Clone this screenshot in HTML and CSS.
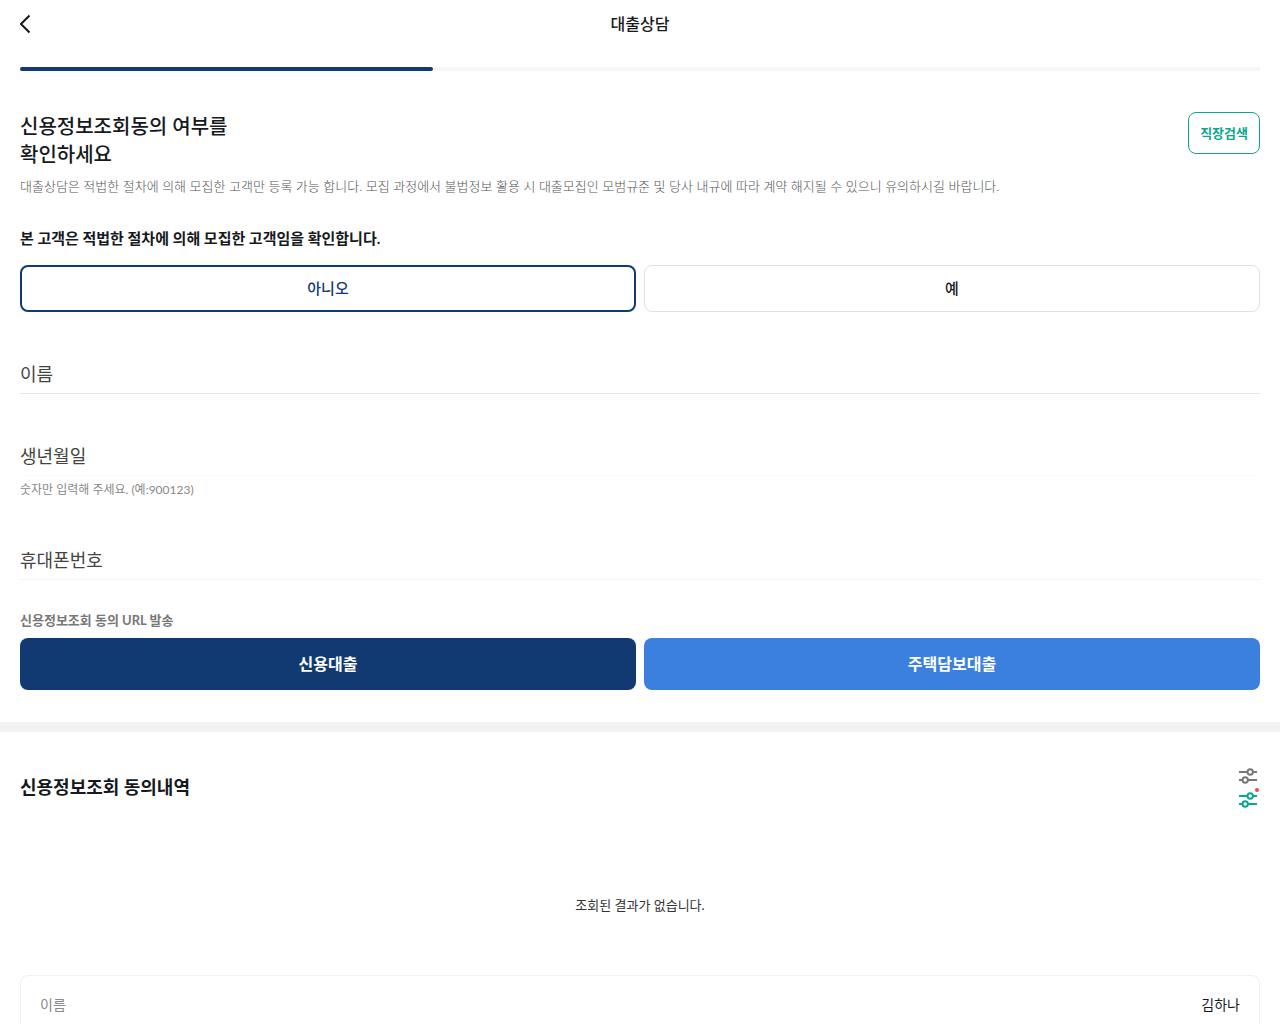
FILE: index.html
```html
<!DOCTYPE html>
<html lang="ko">
<head>
  <meta charset="UTF-8">
  <meta name="viewport" content="width=device-width, initial-scale=1">
  <title>대출상담</title>
  <link rel="stylesheet" href="styles.css">
</head>
<body>

<header class="header">
  <button type="button" class="btn-back" aria-label="이전">
    <svg width="12" height="20" viewBox="0 0 12 20" fill="none" stroke="#16191d" stroke-width="2"><path d="M9.500 1.500 1 10 9.500 18.500"/></svg>
  </button>
  <h1>대출상담</h1>
</header>

<main>
  <section class="consult">
    <div class="progress"><div class="progress-bar"></div></div>

    <div class="title-row">
      <h2>신용정보조회동의 여부를<br>확인하세요</h2>
      <button type="button" class="btn-search">직장검색</button>
    </div>
    <p class="desc">대출상담은 적법한 절차에 의해 모집한 고객만 등록 가능 합니다. 모집 과정에서 불법정보 활용 시 대출모집인 모범규준 및 당사 내규에 따라 계약 해지될 수 있으니 유의하시길 바랍니다.</p>

    <h3 class="question">본 고객은 적법한 절차에 의해 모집한 고객임을 확인합니다.</h3>
    <div class="btn-group">
      <button type="button" class="btn-choice on" aria-pressed="true">아니오</button>
      <button type="button" class="btn-choice" aria-pressed="false">예</button>
    </div>

    <form class="form">
      <div class="field">
        <label for="name">이름</label>
        <input type="text" id="name">
      </div>
      <div class="field light">
        <label for="birth">생년월일</label>
        <input type="text" id="birth" inputmode="numeric" aria-describedby="birth-help">
      </div>
      <p class="help" id="birth-help">숫자만 입력해 주세요. (예:900123)</p>
      <div class="field soft">
        <label for="phone">휴대폰번호</label>
        <input type="tel" id="phone">
      </div>

      <h3 class="send-title">신용정보조회 동의 URL 발송</h3>
      <div class="btn-group">
        <button type="button" class="btn-send navy">신용대출</button>
        <button type="button" class="btn-send blue">주택담보대출</button>
      </div>
    </form>
  </section>

  <section class="history">
    <div class="history-head">
      <h2>신용정보조회 동의내역</h2>
      <div class="filters">
        <button type="button" class="btn-filter" aria-label="필터">
          <svg width="24" height="24" viewBox="0 0 24 24" fill="none" stroke="currentColor" stroke-width="2"><path d="M3 8h8.500M17 8h4M3 16h3.500M12 16h9"/><circle cx="14.200" cy="8" r="2.700"/><circle cx="9.200" cy="16" r="2.700"/></svg>
        </button>
        <button type="button" class="btn-filter active" aria-label="필터 적용됨">
          <svg width="24" height="24" viewBox="0 0 24 24" fill="none" stroke="currentColor" stroke-width="2"><path d="M3 8h8.500M17 8h4M3 16h3.500M12 16h9"/><circle cx="14.200" cy="8" r="2.700"/><circle cx="9.200" cy="16" r="2.700"/><circle cx="21" cy="2" r="2" fill="#f04a43" stroke="none"/></svg>
        </button>
      </div>
    </div>
    <p class="empty">조회된 결과가 없습니다.</p>
    <dl class="card">
      <div class="card-row">
        <dt>이름</dt>
        <dd>김하나</dd>
      </div>
    </dl>
  </section>
</main>

</body>
</html>
```

FILE: styles.css
```css
* {
  margin: 0;
  padding: 0;
  box-sizing: border-box;
}

body {
  font-family: Lato, 'Noto Sans CJK KR', sans-serif;
  background: #fff;
  color: #16191d;
  font-size: 14px;
  line-height: 20px;
}

button,
input {
  font-family: inherit;
  border: 0;
  background: none;
}

button {
  cursor: pointer;
}

svg {
  display: block;
}

/* Header */
.header {
  display: grid;
  grid-template-columns: 40px 1fr 40px;
  align-items: center;
  height: 48px;
  padding: 0 20px;
}

.header h1 {
  font-size: 16px;
  line-height: 24px;
  font-weight: 500;
  text-align: center;
}

.btn-back {
  justify-self: start;
}

/* Consult form */
.consult {
  padding: 19px 20px 32px;
  border-bottom: 10px solid #f2f2f2;
}

.progress {
  height: 4px;
  border-radius: 2px;
  background: #f6f6f7;
}

.progress-bar {
  width: 33.3333%;
  height: 4px;
  border-radius: 2px;
  background: #123a72;
}

.title-row {
  display: flex;
  justify-content: space-between;
  align-items: flex-start;
  margin-top: 41px;
}

.title-row h2 {
  font-size: 20px;
  line-height: 28px;
  font-weight: 500;
}

.btn-search {
  height: 42px;
  padding: 0 11px 2px;
  border: 1px solid #0aa68e;
  border-radius: 8px;
  color: #0aa68e;
  font-size: 13px;
  font-weight: 700;
}

.desc {
  margin-top: 8px;
  color: #555;
  font-size: 13px;
  font-weight: 300;
}

.question {
  margin: 31px 0 16px;
  font-size: 15px;
  line-height: 22px;
  font-weight: 700;
}

.btn-group {
  display: grid;
  grid-template-columns: 1fr 1fr;
  gap: 8px;
}

.btn-choice {
  height: 47px;
  padding-bottom: 2px;
  border: 1px solid #dfe1e4;
  border-radius: 8px;
  color: #16191d;
  font-size: 15px;
  font-weight: 500;
}

.btn-choice.on {
  border: 2px solid #123a72;
  color: #123a72;
}

.form {
  margin-top: 42px;
}

.field {
  display: flex;
  height: 40px;
  border-bottom: 1px solid #e5e5e5;
}

.field + .field {
  margin-top: 42px;
}

.field label {
  color: #444;
  font-size: 18px;
  line-height: 40px;
}

.field input {
  flex: 1;
  min-width: 0;
  padding-left: 12px;
  font-size: 18px;
  outline: none;
}

.field.light {
  border-color: #fafafa;
}

.field.soft {
  margin-top: 40px;
  border-color: #f4f4f4;
}

.help {
  margin-top: 4px;
  color: #888;
  font-size: 12px;
}

.send-title {
  margin: 30px 0 8px;
  color: #777;
  font-size: 13px;
  font-weight: 700;
}

.btn-send {
  height: 52px;
  padding-bottom: 2px;
  border-radius: 8px;
  color: #fff;
  font-size: 16px;
  font-weight: 700;
}

.btn-send.navy {
  background: #123a72;
}

.btn-send.blue {
  background: #3b80df;
}

/* History */
.history {
  padding: 32px 20px;
}

.history-head {
  display: flex;
  justify-content: space-between;
  align-items: center;
}

.history-head h2 {
  padding-bottom: 2px;
  font-size: 18px;
  line-height: 26px;
  font-weight: 700;
}

.btn-filter {
  display: block;
  color: #777;
}

.btn-filter svg {
  overflow: visible;
}

.btn-filter.active {
  color: #0aa68e;
}

.empty {
  padding: 83px 0 60px;
  color: #333;
  font-size: 13px;
  text-align: center;
}

.card {
  padding: 19px;
  border: 1px solid #f2f2f2;
  border-radius: 8px;
}

.card-row {
  display: flex;
  justify-content: space-between;
}

.card-row dt {
  color: #888;
}
```
